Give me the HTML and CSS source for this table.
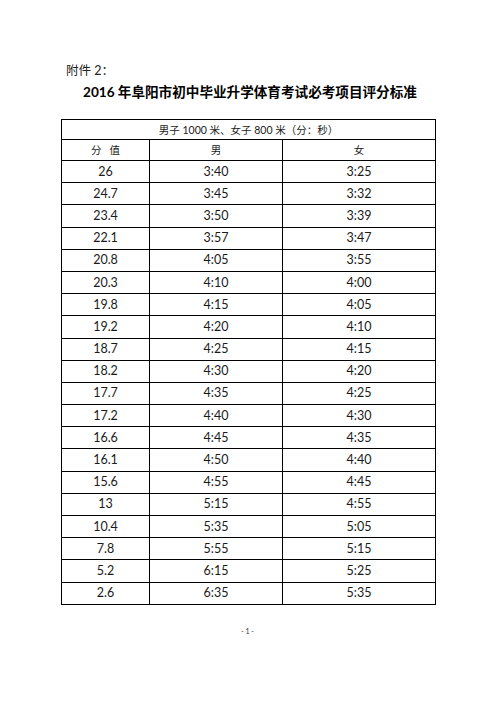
FILE: index.html
```html
<!DOCTYPE html>
<html lang="zh">
<head>
<meta charset="utf-8">
<link rel="stylesheet" href="styles.css">
</head>
<body>
<div class="page">
  <p class="annex">附件 2：</p>
  <h1 class="title">2016 年阜阳市初中毕业升学体育考试必考项目评分标准</h1>
  <table class="score">
    <colgroup><col class="c1"><col class="c2"><col class="c3"></colgroup>
    <tr class="head1"><td colspan="3">男子 1000 米、女子 800 米（分：秒）</td></tr>
    <tr class="head2"><td>分&emsp;值</td><td>男</td><td>女</td></tr>
    <tr><td>26</td><td>3:40</td><td>3:25</td></tr>
    <tr><td>24.7</td><td>3:45</td><td>3:32</td></tr>
    <tr><td>23.4</td><td>3:50</td><td>3:39</td></tr>
    <tr><td>22.1</td><td>3:57</td><td>3:47</td></tr>
    <tr><td>20.8</td><td>4:05</td><td>3:55</td></tr>
    <tr><td>20.3</td><td>4:10</td><td>4:00</td></tr>
    <tr><td>19.8</td><td>4:15</td><td>4:05</td></tr>
    <tr><td>19.2</td><td>4:20</td><td>4:10</td></tr>
    <tr><td>18.7</td><td>4:25</td><td>4:15</td></tr>
    <tr><td>18.2</td><td>4:30</td><td>4:20</td></tr>
    <tr><td>17.7</td><td>4:35</td><td>4:25</td></tr>
    <tr><td>17.2</td><td>4:40</td><td>4:30</td></tr>
    <tr><td>16.6</td><td>4:45</td><td>4:35</td></tr>
    <tr><td>16.1</td><td>4:50</td><td>4:40</td></tr>
    <tr><td>15.6</td><td>4:55</td><td>4:45</td></tr>
    <tr><td>13</td><td>5:15</td><td>4:55</td></tr>
    <tr><td>10.4</td><td>5:35</td><td>5:05</td></tr>
    <tr><td>7.8</td><td>5:55</td><td>5:15</td></tr>
    <tr><td>5.2</td><td>6:15</td><td>5:25</td></tr>
    <tr><td>2.6</td><td>6:35</td><td>5:35</td></tr>
  </table>
  <p class="pageno">- 1 -</p>
</div>
</body>
</html>
```

FILE: styles.css
```css
html, body {
  margin: 0;
  padding: 0;
  background: #fff;
}
body {
  font-family: Lato, "Noto Sans CJK SC", sans-serif;
  color: #111;
}
.page {
  width: 496px;
  height: 702px;
  padding: 63px 0 0 61px;
  box-sizing: border-box;
}
.annex {
  margin: 0 0 0 5px;
  font-size: 12.5px;
  line-height: 16px;
  color: #222;
}
.title {
  margin: 4px 0 0 22px;
  font-size: 13.6px;
  line-height: 18px;
  font-weight: 700;
  color: #000;
  font-family: Lato, "Noto Sans CJK SC", sans-serif;
}
.score {
  margin-top: 18px;
  border-collapse: collapse;
  width: 374px;
  table-layout: fixed;
}
.c1 { width: 88px; }
.c2 { width: 133px; }
.c3 { width: 153px; }
.score td {
  border: 1px solid #000;
  text-align: center;
  padding: 0;
  height: 22.2px;
  box-sizing: border-box;
  font-size: 12.5px;
  line-height: 14px;
  color: #1a1a1a;
}
.score .head1 td {
  height: 20px;
  font-size: 10.5px;
}
.score .head2 td {
  height: 21px;
  font-size: 10.5px;
}
.pageno {
  margin: 21px 0 0 180px;
  font-size: 7px;
  line-height: 10px;
  color: #333;
}
```
